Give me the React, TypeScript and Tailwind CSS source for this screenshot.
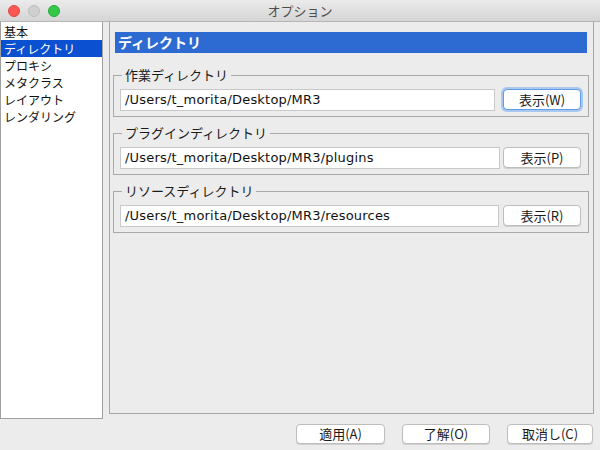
import React from "react";

const cjk = "font-['Noto_Sans_CJK_JP','Noto_Sans',sans-serif]";
const mono = "font-['DejaVu_Sans','Noto_Sans_CJK_JP',sans-serif]";

const categories = ["基本", "ディレクトリ", "プロキシ", "メタクラス", "レイアウト", "レンダリング"];

type DirGroupProps = {
  label: string;
  path: string;
  button: string;
  focused?: boolean;
  fieldWidth: string;
};

const DirGroup: React.FC<DirGroupProps> = ({ label, path, button, focused, fieldWidth }) => (
  <fieldset className="border border-[#a9a9a9] ml-[3px] mr-[4px] pl-[6px] pr-[7px] pb-[5px] pt-[5px]">
    <legend className={`${cjk} ml-[2px] px-[3px] text-[13px] leading-[18px] text-[#1a1a1a]`}>{label}</legend>
    <div className="flex items-start justify-between">
      <div
        className={`${mono} ${fieldWidth} h-[22px] bg-white border border-[#c8c8c8] px-[4px] text-[13px] tracking-[0.2px] leading-[20px] text-[#111]`}
      >
        {path}
      </div>
      <button
        className={`${cjk} w-[78px] h-[21px] rounded-[4px] bg-white text-[13px] leading-[19px] text-[#1a1a1a] border ${
          focused
            ? "border-[#5f9ae6] shadow-[0_0_0_2px_#a9c8f0]"
            : "border-[#bdbdbd] shadow-[0_1px_0_#d0d0d0]"
        }`}
      >
        {button}
      </button>
    </div>
  </fieldset>
);

const BottomButton: React.FC<{ label: string; w: string }> = ({ label, w }) => (
  <button
    className={`${cjk} ${w} h-[20px] rounded-[4px] bg-white border border-[#bdbdbd] shadow-[0_1px_0_#d0d0d0] text-[13px] leading-[18px] text-[#1a1a1a]`}
  >
    {label}
  </button>
);

export default function App() {
  return (
    <div className="w-[600px] h-[450px] bg-[#ececec] flex flex-col overflow-hidden">
      {/* title bar */}
      <div className="relative h-[22px] bg-gradient-to-b from-[#ebebeb] to-[#d5d5d5] border-b border-[#b5b5b5] flex items-center justify-center">
        <div className="absolute left-[8px] top-[5px] flex gap-[8px]">
          <span className="w-[12px] h-[12px] rounded-full bg-[#fc5753] border border-[#df4744]" />
          <span className="w-[12px] h-[12px] rounded-full bg-[#d0d0d0] border border-[#bcbcbc]" />
          <span className="w-[12px] h-[12px] rounded-full bg-[#34c748] border border-[#27aa35]" />
        </div>
        <span className={`${cjk} text-[13px] text-[#4d4d4d]`}>オプション</span>
      </div>

      <div className="flex h-[397px]">
        {/* category list */}
        <div className="w-[103px] h-full bg-white border border-t-0 border-[#a0a0a0] pt-[1px]">
          {categories.map((c, i) => (
            <div
              key={c}
              className={`${cjk} h-[17px] pl-[3px] text-[12px] leading-[17px] ${
                i === 1 ? "bg-[#0b50d0] text-white" : "text-[#111]"
              }`}
            >
              {c}
            </div>
          ))}
        </div>

        {/* settings panel */}
        <div className="ml-[6px] w-[485px] h-[392px] border border-t-0 border-[#a6a6a6] pt-[10px] flex flex-col">
          <div
            className={`${cjk} ml-[5px] mr-[6px] h-[21px] bg-[#2d6bd2] text-white font-bold text-[14px] leading-[21px] pl-[3px]`}
          >
            ディレクトリ
          </div>
          <div className="mt-[13px] flex flex-col gap-[7px]">
            <DirGroup
              label="作業ディレクトリ"
              path="/Users/t_morita/Desktop/MR3"
              button="表示(W)"
              focused
              fieldWidth="w-[375px]"
            />
            <DirGroup
              label="プラグインディレクトリ"
              path="/Users/t_morita/Desktop/MR3/plugins"
              button="表示(P)"
              fieldWidth="w-[380px]"
            />
            <DirGroup
              label="リソースディレクトリ"
              path="/Users/t_morita/Desktop/MR3/resources"
              button="表示(R)"
              fieldWidth="w-[379px]"
            />
          </div>
        </div>
      </div>

      {/* dialog buttons */}
      <div className="flex justify-end gap-[17px] pr-[7px] pt-[5px]">
        <BottomButton label="適用(A)" w="w-[89px]" />
        <BottomButton label="了解(O)" w="w-[88px]" />
        <BottomButton label="取消し(C)" w="w-[86px]" />
      </div>
    </div>
  );
}
